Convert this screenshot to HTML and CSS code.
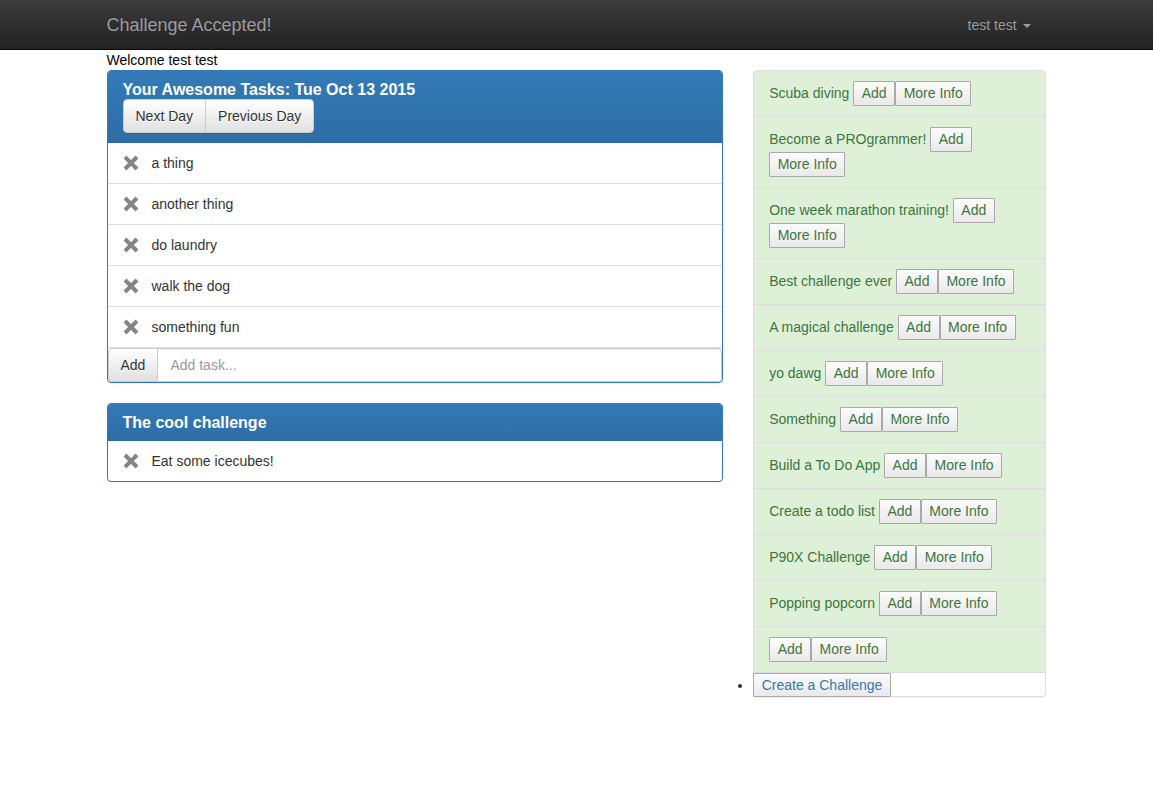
FILE: index.html
```html
<!DOCTYPE html>
<html>
<head>
<meta charset="utf-8">
<link rel="stylesheet" href="styles.css">
</head>
<body>
<nav class="navbar">
  <div class="container nav-inner">
    <span class="brand">Challenge Accepted!</span>
    <span class="user">test test <span class="caret"></span></span>
  </div>
</nav>
<div class="container">
  <div class="welcome">Welcome test test</div>
  <div class="row">
    <div class="col-main">
      <div class="panel panel-primary">
        <div class="panel-heading">
          <h3 class="panel-title">Your Awesome Tasks: Tue Oct 13 2015</h3>
          <div class="btn-group"><button class="btn first">Next Day</button><button class="btn last">Previous Day</button></div>
        </div>
        <ul class="list-group">
          <li class="task"><svg class="x" viewBox="0 0 16 16"><path d="M2 2L14 14M14 2L2 14"/></svg>a thing</li>
          <li class="task"><svg class="x" viewBox="0 0 16 16"><path d="M2 2L14 14M14 2L2 14"/></svg>another thing</li>
          <li class="task"><svg class="x" viewBox="0 0 16 16"><path d="M2 2L14 14M14 2L2 14"/></svg>do laundry</li>
          <li class="task"><svg class="x" viewBox="0 0 16 16"><path d="M2 2L14 14M14 2L2 14"/></svg>walk the dog</li>
          <li class="task"><svg class="x" viewBox="0 0 16 16"><path d="M2 2L14 14M14 2L2 14"/></svg>something fun</li>
        </ul>
        <div class="input-group"><button class="btn addon">Add</button><input class="form-control" type="text" placeholder="Add task..."></div>
      </div>
      <div class="panel panel-primary">
        <div class="panel-heading">
          <h3 class="panel-title">The cool challenge</h3>
        </div>
        <ul class="list-group">
          <li class="task"><svg class="x" viewBox="0 0 16 16"><path d="M2 2L14 14M14 2L2 14"/></svg>Eat some icecubes!</li>
        </ul>
      </div>
    </div>
    <div class="col-side">
      <div class="panel panel-default">
        <ul class="list-group side">
          <li class="chal">Scuba diving <button class="nb">Add</button><button class="nb">More Info</button></li>
          <li class="chal">Become a PROgrammer! <button class="nb">Add</button><button class="nb">More Info</button></li>
          <li class="chal">One week marathon training! <button class="nb">Add</button><button class="nb">More Info</button></li>
          <li class="chal">Best challenge ever <button class="nb">Add</button><button class="nb">More Info</button></li>
          <li class="chal">A magical challenge <button class="nb">Add</button><button class="nb">More Info</button></li>
          <li class="chal">yo dawg <button class="nb">Add</button><button class="nb">More Info</button></li>
          <li class="chal">Something <button class="nb">Add</button><button class="nb">More Info</button></li>
          <li class="chal">Build a To Do App <button class="nb">Add</button><button class="nb">More Info</button></li>
          <li class="chal">Create a todo list <button class="nb">Add</button><button class="nb">More Info</button></li>
          <li class="chal">P90X Challenge <button class="nb">Add</button><button class="nb">More Info</button></li>
          <li class="chal">Popping popcorn <button class="nb">Add</button><button class="nb">More Info</button></li>
          <li class="chal"><button class="nb">Add</button><button class="nb">More Info</button></li>
          <li class="create"><button class="nb link">Create a Challenge</button></li>
        </ul>
      </div>
    </div>
  </div>
</div>
</body>
</html>
```
FILE: styles.css
```css
* { box-sizing: border-box; }
html, body { margin: 0; padding: 0; }
body {
  font-family: "Liberation Sans", Arial, sans-serif;
  font-size: 14px;
  line-height: 20px;
  color: #333;
  background: #fff;
}
button, input { font: inherit; color: inherit; margin: 0; }
.container { width: 970px; margin: 0 auto; padding: 0 15px; }
.navbar {
  height: 50px;
  background: linear-gradient(#3c3c3c, #222);
  border-bottom: 1px solid #080808;
}
.nav-inner { display: flex; justify-content: space-between; align-items: flex-start; }
.brand { font-size: 18px; line-height: 20px; padding: 15px 0 14px; color: #9d9d9d; text-shadow: 0 -1px 0 rgba(0,0,0,.25); }
.user { padding: 15px 16px 14px 0; color: #9d9d9d; line-height: 20px; text-shadow: 0 -1px 0 rgba(0,0,0,.25); }
.caret {
  display: inline-block; width: 0; height: 0; margin-left: 2px; vertical-align: middle;
  border-top: 4px solid #9d9d9d; border-left: 4px solid transparent; border-right: 4px solid transparent;
}
.welcome { line-height: 20px; color: #000; }
.row { display: flex; margin: 0 -15px; }
.col-main { width: 646.67px; padding: 0 15px; }
.col-side { width: 323.33px; padding: 0 15px; }
.panel { border: 1px solid transparent; border-radius: 4px; margin-bottom: 20px; background: #fff; box-shadow: 0 1px 1px rgba(0,0,0,.05); }
.panel-primary { border-color: #337ab7; }
.panel-default { border-color: #ddd; }
.panel-heading {
  padding: 10px 15px;
  background: linear-gradient(#337ab7, #2e6da4);
  color: #fff;
  border-radius: 3px 3px 0 0;
}
.panel-title { margin: 0; font-size: 16px; line-height: 17.6px; font-weight: bold; }
.btn-group { display: flex; }
.btn {
  display: inline-block;
  padding: 6px 12px;
  line-height: 20px;
  font-size: 14px;
  color: #333;
  border: 1px solid #ccc;
  background: linear-gradient(#fff, #e0e0e0);
  box-shadow: inset 0 1px 0 rgba(255,255,255,.15), 0 1px 1px rgba(0,0,0,.075);
  text-shadow: 0 1px 0 #fff;
}
.btn.first { border-radius: 4px 0 0 4px; }
.btn.last { border-radius: 0 4px 4px 0; margin-left: -1px; }
.list-group { list-style: none; margin: 0; padding: 0; }
.task {
  display: flex; align-items: center;
  padding: 10px 15px;
  border-top: 1px solid #ddd;
  line-height: 20px;
}
.list-group .task:first-child { border-top: 0; }
.panel > .list-group:last-child .task:last-child { border-radius: 0 0 3px 3px; }
.x { width: 16px; height: 16px; margin-right: 13px; flex: none; }
.x path { stroke: #858585; stroke-width: 4; fill: none; }
.input-group { display: flex; border-top: 1px solid #ddd; }
.btn.addon { border-radius: 4px 0 0 4px; padding: 6px 12px; }
.form-control {
  flex: 1; height: 34px; padding: 6px 12px; border: 1px solid #ccc; border-left: 0;
  border-radius: 0 4px 4px 0; box-shadow: inset 0 1px 1px rgba(0,0,0,.075); outline: none; color: #555;
}
.form-control::placeholder { color: #999; }
.side { list-style: disc; }
.chal {
  display: block;
  padding: 10px 15px;
  line-height: 25px;
  background: #dff0d8;
  color: #3c763d;
  border-top: 1px solid #ddd;
}
.side .chal:first-child { border-top: 0; border-radius: 3px 3px 0 0; }
.nb {
  display: inline-block;
  vertical-align: top;
  height: 25px;
  line-height: 23px;
  padding: 0 7.5px;
  border: 1px solid #a9a9a9;
  border-radius: 1px;
  background: linear-gradient(#fcfcfc, #e9e9e9);
}
.create { display: list-item; border-top: 1px solid #ddd; line-height: 24px; height: 24px; margin-left: -1px; }
.create .nb { height: 24px; line-height: 22px; vertical-align: top; }
.nb.link { color: #337ab7; }
.create::marker { color: #333; }
```
